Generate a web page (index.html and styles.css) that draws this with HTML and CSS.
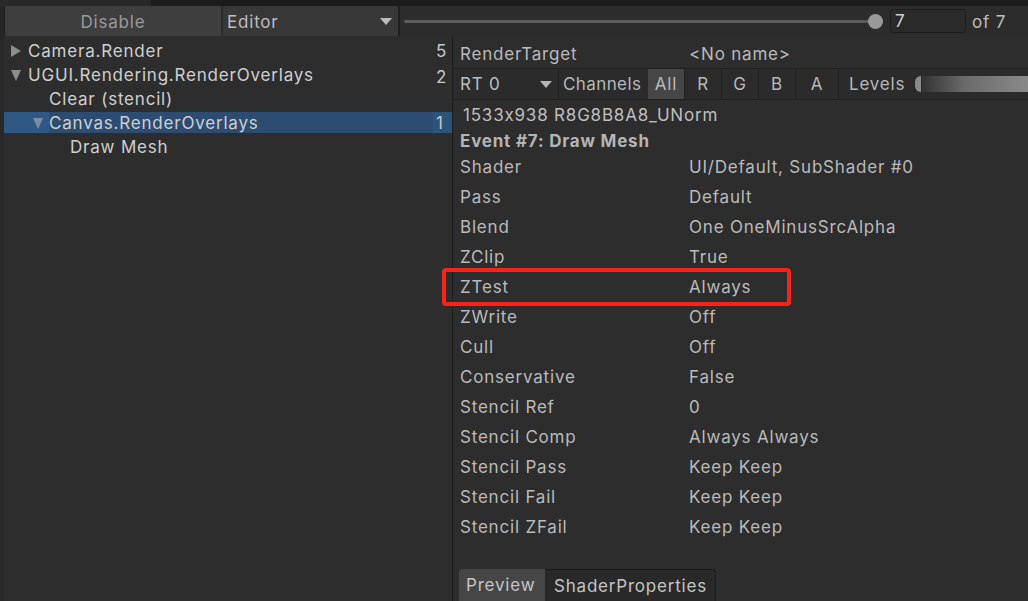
FILE: index.html
```html
<!DOCTYPE html>
<html>
<head>
<meta charset="utf-8">
<link rel="stylesheet" href="styles.css">
</head>
<body>
<div class="app">
  <div class="topstrip"><div class="tab"></div></div>
  <div class="toolbar">
    <div class="btn-disable">Disable</div>
    <div class="dropdown-editor"><span>Editor</span><span class="caret"></span></div>
    <div class="vsep"></div>
    <div class="slider"><div class="track"></div><div class="thumb"></div></div>
    <div class="numfield">7</div>
    <div class="oftext">of 7</div>
  </div>
  <div class="main">
    <div class="tree">
      <div class="row"><span class="indent0"><span class="arrow-right"></span></span><span class="label">Camera.Render</span><span class="count">5</span></div>
      <div class="row"><span class="indent0"><span class="arrow-down"></span></span><span class="label">UGUI.Rendering.RenderOverlays</span><span class="count c2">2</span></div>
      <div class="row"><span class="indent1"></span><span class="label">Clear (stencil)</span></div>
      <div class="row selected"><span class="selstart"></span><span class="indent1b"><span class="arrow-down"></span></span><span class="label">Canvas.RenderOverlays</span><span class="count selcount">1</span></div>
      <div class="row"><span class="indent2"></span><span class="label">Draw Mesh</span></div>
    </div>
    <div class="details">
      <div class="rtrow"><span class="plabel">RenderTarget</span><span class="pvalue">&lt;No name&gt;</span></div>
      <div class="chanrow">
        <div class="rtdrop"><span>RT 0</span><span class="caret"></span></div>
        <div class="chanlabel">Channels</div>
        <div class="chbtn active">All</div>
        <div class="chbtn">R</div>
        <div class="chbtn">G</div>
        <div class="chbtn">B</div>
        <div class="chbtn wide">A</div>
        <div class="levels">Levels</div>
        <div class="levelbar"><div class="lknob"></div><div class="lgrad"></div></div>
      </div>
      <div class="info">1533x938 R8G8B8A8_UNorm</div>
      <div class="event">Event #7: Draw Mesh</div>
      <div class="props">
        <div class="prow"><span class="plabel">Shader</span><span class="pvalue">UI/Default, SubShader #0</span></div>
        <div class="prow"><span class="plabel">Pass</span><span class="pvalue">Default</span></div>
        <div class="prow"><span class="plabel">Blend</span><span class="pvalue">One OneMinusSrcAlpha</span></div>
        <div class="prow"><span class="plabel">ZClip</span><span class="pvalue">True</span></div>
        <div class="prow highlight"><span class="plabel">ZTest</span><span class="pvalue">Always</span><div class="redbox"></div></div>
        <div class="prow"><span class="plabel">ZWrite</span><span class="pvalue">Off</span></div>
        <div class="prow"><span class="plabel">Cull</span><span class="pvalue">Off</span></div>
        <div class="prow"><span class="plabel">Conservative</span><span class="pvalue">False</span></div>
        <div class="prow"><span class="plabel">Stencil Ref</span><span class="pvalue">0</span></div>
        <div class="prow"><span class="plabel">Stencil Comp</span><span class="pvalue">Always Always</span></div>
        <div class="prow"><span class="plabel">Stencil Pass</span><span class="pvalue">Keep Keep</span></div>
        <div class="prow"><span class="plabel">Stencil Fail</span><span class="pvalue">Keep Keep</span></div>
        <div class="prow"><span class="plabel">Stencil ZFail</span><span class="pvalue">Keep Keep</span></div>
      </div>
      <div class="tabs">
        <div class="tabbtn active">Preview</div>
        <div class="tabbtn">ShaderProperties</div>
      </div>
    </div>
  </div>
</div>
</body>
</html>
```
FILE: styles.css
```css
* { box-sizing: border-box; }
html, body {
  margin: 0;
  padding: 0;
  width: 1028px;
  height: 601px;
  overflow: hidden;
  background: #2d2d2d;
  font-family: Inter, "Noto Sans", sans-serif;
  font-size: 17px;
  letter-spacing: 0.8px;
  font-feature-settings: "calt" 0;
  color: #bdbdbd;
}
.app { display: flex; flex-direction: column; height: 601px; }

.topstrip { height: 6px; background: #1c1c1c; display: flex; }
.topstrip .tab { width: 151px; background: #292929; }

.toolbar {
  height: 30px;
  display: flex;
  align-items: stretch;
  background: #2c2c2c;
  border-left: 4px solid #262626;
}
.btn-disable {
  width: 217px;
  border-left: 1px solid #1d1d1d;
  background: #3e3e3e;
  color: #9a9a9a;
  display: flex;
  align-items: center;
  justify-content: center;
  padding-top: 1px;
}
.dropdown-editor {
  width: 175px;
  margin-left: 2px;
  background: #383838;
  color: #bdbdbd;
  display: flex;
  align-items: center;
  justify-content: space-between;
  padding: 1px 6px 0 4px;
}
.caret {
  width: 0; height: 0;
  border-left: 6px solid transparent;
  border-right: 6px solid transparent;
  border-top: 7px solid #bcbcbc;
}
.vsep { width: 2px; background: #1f1f1f; }
.slider {
  position: relative;
  width: 479px;
  margin-left: 4px;
}
.slider .track {
  position: absolute;
  left: 0; right: 8px; top: 14px;
  height: 3px;
  background: #5d5d5d;
  border-radius: 2px;
}
.slider .thumb {
  position: absolute;
  right: 0; top: 8px;
  width: 15px; height: 15px;
  border-radius: 50%;
  background: #999999;
}
.numfield {
  margin: 3px 0 3px 7px;
  width: 76px;
  background: #2a2a2a;
  border: 1px solid #1b1b1b;
  border-radius: 3px;
  color: #d2d2d2;
  padding-left: 4px;
  line-height: 22px;
}
.oftext {
  margin-left: 6px;
  display: flex;
  align-items: center;
  color: #bdbdbd;
  padding-top: 1px;
}

.main { flex: 1; display: flex; }
.tree {
  width: 453px;
  border-left: 4px solid #282828;
  border-right: 1px solid #1b1b1b;
  background: #2d2d2d;
  padding-top: 2px;
}
.row {
  height: 24px;
  display: flex;
  align-items: center;
  color: #cfcfcf;
  position: relative;
  padding-top: 2px;
}
.row.selected { background: #2d4c72; margin-top: 2px; height: 21px; margin-bottom: 1px; padding-top: 1px; }
.selstart { width: 45px; background: #2f5883; position: absolute; left: 0; top: 0; bottom: 0; }
.indent0 { width: 24px; display: flex; align-items: center; padding-left: 7px; }
.indent1 { width: 45px; }
.indent1b { width: 45px; display: flex; align-items: center; padding-left: 29px; position: relative; }
.indent2 { width: 66px; }
.arrow-right {
  width: 0; height: 0;
  border-top: 6px solid transparent;
  border-bottom: 6px solid transparent;
  border-left: 10px solid #8c8c8c;
}
.arrow-down {
  width: 0; height: 0;
  border-left: 5px solid transparent;
  border-right: 5px solid transparent;
  border-top: 11px solid #8c8c8c;
}
.row.selected .arrow-down { border-top-color: #7b8da4; }
.label { flex: 1; white-space: nowrap; }
.count {
  width: 19px;
  padding-left: 3px;
  color: #c8c8c8;
  align-self: stretch;
  display: flex;
  align-items: center;
}
.count.c2 { padding-top: 3px; }
.selcount { background: #2a5479; position: absolute; right: 0; top: 0; bottom: 0; padding-top: 1px; }

.details {
  flex: 1;
  background: #2d2d2d;
  display: flex;
  flex-direction: column;
}
.rtrow {
  height: 33px;
  display: flex;
  align-items: center;
  border-bottom: 1px solid #1f1f1f;
  padding-top: 3px;
}
.plabel { width: 236px; padding-left: 7px; color: #bababa; white-space: nowrap; }
.pvalue { color: #bababa; white-space: nowrap; }
.chanrow {
  height: 31px;
  display: flex;
  align-items: stretch;
  background: #2b2b2b;
  border-bottom: 1px solid #1f1f1f;
}
.rtdrop {
  width: 106px;
  display: flex;
  align-items: center;
  justify-content: space-between;
  padding: 0 6px 0 7px;
  border-right: 1px solid #1f1f1f;
}
.rtdrop .caret { border-top-color: #b4b4b4; }
.chanlabel { width: 89px; display: flex; align-items: center; padding-left: 4px; color: #b8b8b8; letter-spacing: 0.4px; }
.chbtn {
  width: 37px;
  display: flex;
  align-items: center;
  justify-content: center;
  border-right: 1px solid #1f1f1f;
  color: #b8b8b8;
}
.chbtn.active { background: #464646; }
.chbtn.wide { width: 43px; }
.levels { display: flex; align-items: center; padding-left: 10px; width: 76px; color: #b8b8b8; }
.levelbar { flex: 1; display: flex; align-items: center; }
.lknob { width: 6px; height: 16px; background: #8a8a8a; border-radius: 8px 0 0 8px; }
.lgrad { flex: 1; height: 16px; margin-left: 1px; background: linear-gradient(to right, #333333, #6a6a6a 40%, #8a8a8a 100%); }

.info { height: 26px; display: flex; align-items: center; padding-left: 10px; padding-top: 4px; color: #bfbfbf; }
.event { height: 26px; display: flex; align-items: center; padding-left: 7px; padding-top: 4px; font-weight: 700; color: #b4b4b4; }
.props { display: flex; flex-direction: column; }
.prow { height: 30px; display: flex; align-items: center; position: relative; }
.redbox {
  position: absolute;
  left: -11px; top: -4px;
  width: 349px; height: 38px;
  border: 4px solid #fc2217;
  border-radius: 4px;
}
.tabs {
  margin-top: 27px;
  margin-left: 6px;
  display: flex;
  height: 32px;
}
.tabbtn {
  padding: 0 8px 0 9px;
  display: flex;
  align-items: center;
  background: #292929;
  border: 1px solid #1a1a1a;
  border-left: none;
  border-bottom: none;
  border-radius: 0 4px 0 0;
  color: #c4c4c4;
  white-space: nowrap;
}
.tabbtn.active {
  background: #464646;
  border: none;
  border-radius: 4px 0 0 0;
  width: 86px;
  padding-left: 7px;
}
```
